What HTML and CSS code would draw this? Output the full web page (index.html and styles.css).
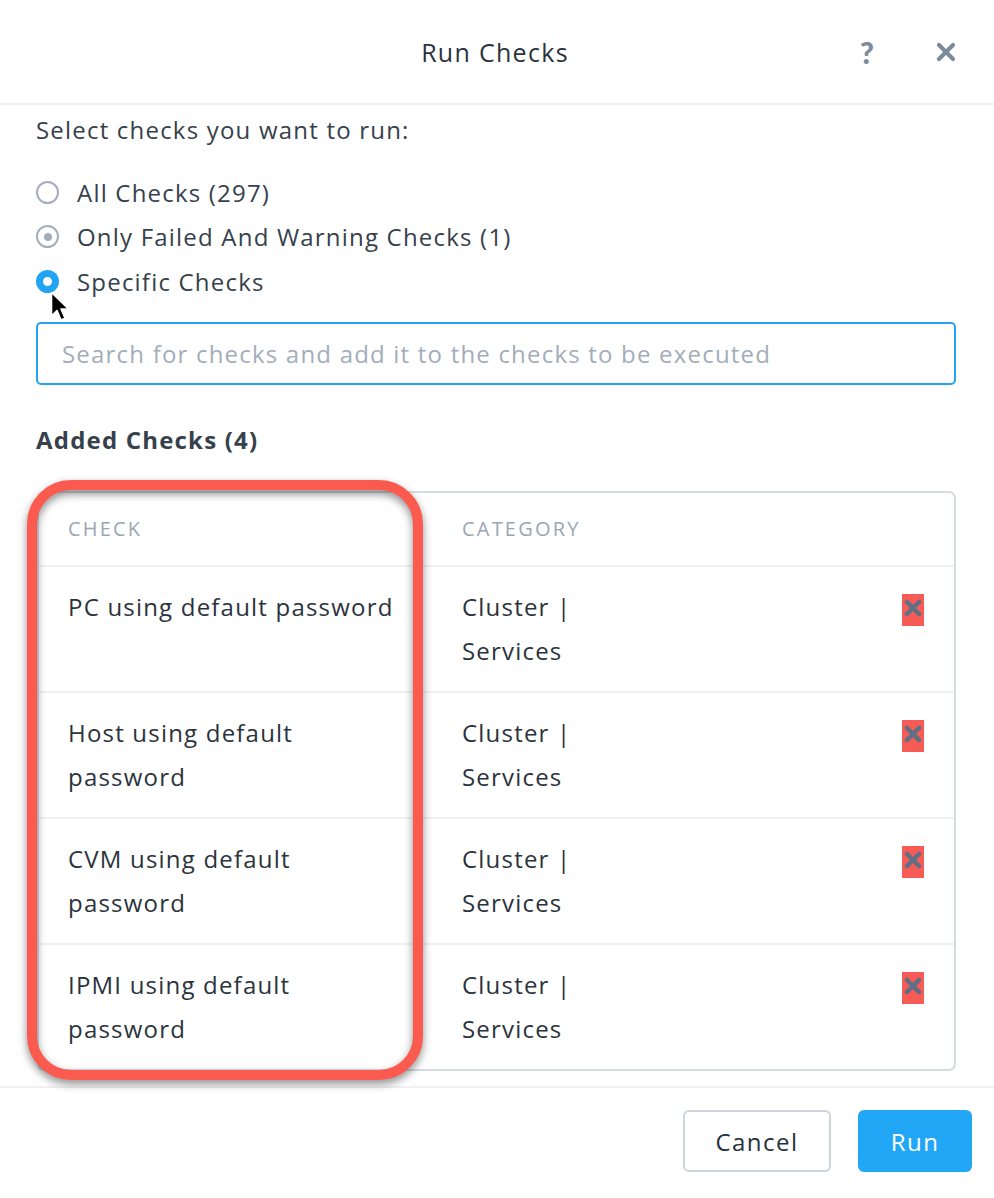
FILE: index.html
```html
<!DOCTYPE html>
<html lang="en">
<head>
<meta charset="utf-8">
<title>Run Checks</title>
<link rel="stylesheet" href="styles.css">
</head>
<body>
<div class="modal">
  <header class="modal-header">
    <div></div>
    <h1 class="title">Run Checks</h1>
    <div class="header-actions">
      <span class="icon-help">?</span>
      <svg class="icon-close" width="20" height="20" viewBox="0 0 20 20"><path d="M3 3 L17 17 M17 3 L3 17" stroke="#7b8a9c" stroke-width="4.2" stroke-linecap="round"/></svg>
    </div>
  </header>

  <main class="modal-body">
    <p class="prompt">Select checks you want to run:</p>
    <div class="radios">
      <label class="radio-row"><span class="radio"></span><span>All Checks (297)</span></label>
      <label class="radio-row"><span class="radio radio-dim"></span><span>Only Failed And Warning Checks (1)</span></label>
      <label class="radio-row"><span class="radio radio-on"></span><span>Specific Checks</span>
        <svg class="cursor" width="22" height="34" viewBox="0 0 22 34"><path d="M1.5 1.5 L1.5 25 L7 19.5 L11 29 L15 27.3 L11 18 L18.5 18 Z" fill="#000" stroke="#fff" stroke-width="1.6" stroke-linejoin="round"/></svg>
      </label>
    </div>
    <div class="search">Search for checks and add it to the checks to be executed</div>

    <h2 class="section-title">Added Checks (4)</h2>

    <div class="table-wrap">
      <div class="table">
        <div class="row head">
          <div class="cell c-check">CHECK</div>
          <div class="cell c-cat">CATEGORY</div>
          <div class="cell c-act"></div>
        </div>
        <div class="row">
          <div class="cell c-check">PC using default password</div>
          <div class="cell c-cat">Cluster | Services</div>
          <div class="cell c-act"><span class="del"><svg width="18" height="18" viewBox="0 0 18 18"><path d="M3 3 L15 15 M15 3 L3 15" stroke="#5f6f86" stroke-width="4.5" stroke-linecap="round"/></svg></span></div>
        </div>
        <div class="row">
          <div class="cell c-check">Host using default password</div>
          <div class="cell c-cat">Cluster | Services</div>
          <div class="cell c-act"><span class="del"><svg width="18" height="18" viewBox="0 0 18 18"><path d="M3 3 L15 15 M15 3 L3 15" stroke="#5f6f86" stroke-width="4.5" stroke-linecap="round"/></svg></span></div>
        </div>
        <div class="row">
          <div class="cell c-check">CVM using default password</div>
          <div class="cell c-cat">Cluster | Services</div>
          <div class="cell c-act"><span class="del"><svg width="18" height="18" viewBox="0 0 18 18"><path d="M3 3 L15 15 M15 3 L3 15" stroke="#5f6f86" stroke-width="4.5" stroke-linecap="round"/></svg></span></div>
        </div>
        <div class="row">
          <div class="cell c-check">IPMI using default password</div>
          <div class="cell c-cat">Cluster | Services</div>
          <div class="cell c-act"><span class="del"><svg width="18" height="18" viewBox="0 0 18 18"><path d="M3 3 L15 15 M15 3 L3 15" stroke="#5f6f86" stroke-width="4.5" stroke-linecap="round"/></svg></span></div>
        </div>
      </div>
      <div class="highlight"></div>
    </div>
  </main>

  <footer class="modal-footer">
    <button class="btn btn-cancel">Cancel</button>
    <button class="btn btn-run">Run</button>
  </footer>
</div>
</body>
</html>
```

FILE: styles.css
```css
* { box-sizing: border-box; }
html, body { margin: 0; padding: 0; background: #fff; }
body {
  font-family: "Open Sans", "Lato", sans-serif;
  color: #2f3944;
  letter-spacing: 1.2px;
}
.modal {
  width: 994px;
  height: 1198px;
  display: flex;
  flex-direction: column;
}
.modal-header {
  height: 105px;
  border-bottom: 2px solid #eef0f2;
  display: grid;
  grid-template-columns: 1fr auto 1fr;
  align-items: center;
}
.title {
  margin: 0;
  font-size: 25px;
  letter-spacing: 1.3px;
  font-weight: 400;
  color: #2b333d;
  padding-right: 4px;
}
.header-actions {
  justify-self: end;
  display: flex;
  align-items: center;
  gap: 62px;
  padding-right: 38px;
}
.icon-help {
  font-family: "Lato", sans-serif;
  font-size: 30px;
  font-weight: 900;
  color: #7b8a9c;
  line-height: 1;
  letter-spacing: 0;
}
.icon-close { display: block; }

.modal-body {
  flex: 1;
  padding: 0 38px 0 36px;
}
.prompt {
  margin: 10px 0 0;
  font-size: 24px;
  line-height: 30px;
  color: #36414c;
}
.radios {
  margin-top: 25px;
  display: flex;
  flex-direction: column;
}
.radio-row {
  position: relative;
  height: 44.5px;
  display: flex;
  align-items: center;
  gap: 18px;
  font-size: 24px;
  color: #36414c;
}
.radio {
  width: 23px;
  height: 23px;
  border-radius: 50%;
  border: 2px solid #a3aebb;
  background: #fff;
  flex: none;
  position: relative;
}
.radio-dim::after {
  content: "";
  position: absolute;
  left: 50%; top: 50%;
  width: 8px; height: 8px;
  margin: -4px 0 0 -4px;
  border-radius: 50%;
  background: #a3aebb;
}
.radio-on {
  border: 7px solid #22a4f4;
  background: #fff;
}
.cursor {
  position: absolute;
  left: 14px;
  top: 32px;
}
.search {
  margin-top: 18px;
  height: 63px;
  border: 2px solid #25a3f3;
  border-radius: 5px;
  padding-left: 24px;
  display: flex;
  align-items: center;
  font-size: 24px;
  color: #a3adba;
}
.section-title {
  margin: 40px 0 0;
  font-size: 24px;
  line-height: 30px;
  font-weight: 700;
  color: #36414c;
}
.table-wrap {
  position: relative;
  margin-top: 36px;
  margin-left: 1px;
}
.table {
  border: 2px solid #d7dce2;
  border-radius: 7px;
}
.row {
  display: grid;
  grid-template-columns: 423px 1fr 60px;
  height: 126px;
  border-top: 2px solid #eef0f3;
}
.row.head {
  height: 72px;
  border-top: none;
}
.cell {
  font-size: 24px;
  line-height: 44px;
  color: #2b333d;
  padding-top: 18px;
}
.c-check { padding-left: 29px; padding-right: 60px; }
.c-cat { max-width: 160px; }
.head .cell {
  padding-top: 0;
  display: flex;
  align-items: center;
  font-size: 20px;
  color: #9aa6b4;
  letter-spacing: 2.2px;
}
.c-act {
  padding-top: 27px;
  display: flex;
  justify-content: flex-end;
  align-items: flex-start;
  padding-right: 30px;
}
.del {
  display: flex;
  align-items: center;
  justify-content: center;
  width: 22px;
  height: 32px;
  background: #f75b55;
  padding-bottom: 3px;
}
.del svg { display: block; flex: none; }
.highlight {
  position: absolute;
  left: -10px;
  top: -11px;
  width: 396px;
  height: 600px;
  border: 10px solid #fb5a4e;
  border-radius: 44px;
  filter: drop-shadow(0 4px 4px rgba(0,0,0,0.45));
  pointer-events: none;
}
.modal-footer {
  height: 112px;
  border-top: 2px solid #eef0f2;
  display: flex;
  justify-content: flex-end;
  align-items: flex-start;
  gap: 27px;
  padding: 22px 22px 0 0;
}
.btn {
  height: 62px;
  border-radius: 6px;
  font-family: inherit;
  font-size: 24px;
  letter-spacing: 1.5px;
  cursor: pointer;
}
.btn-cancel {
  width: 148px;
  background: #fff;
  border: 2px solid #cdd4db;
  color: #26303b;
}
.btn-run {
  width: 114px;
  background: #22a7f7;
  border: none;
  color: #fff;
}
```
